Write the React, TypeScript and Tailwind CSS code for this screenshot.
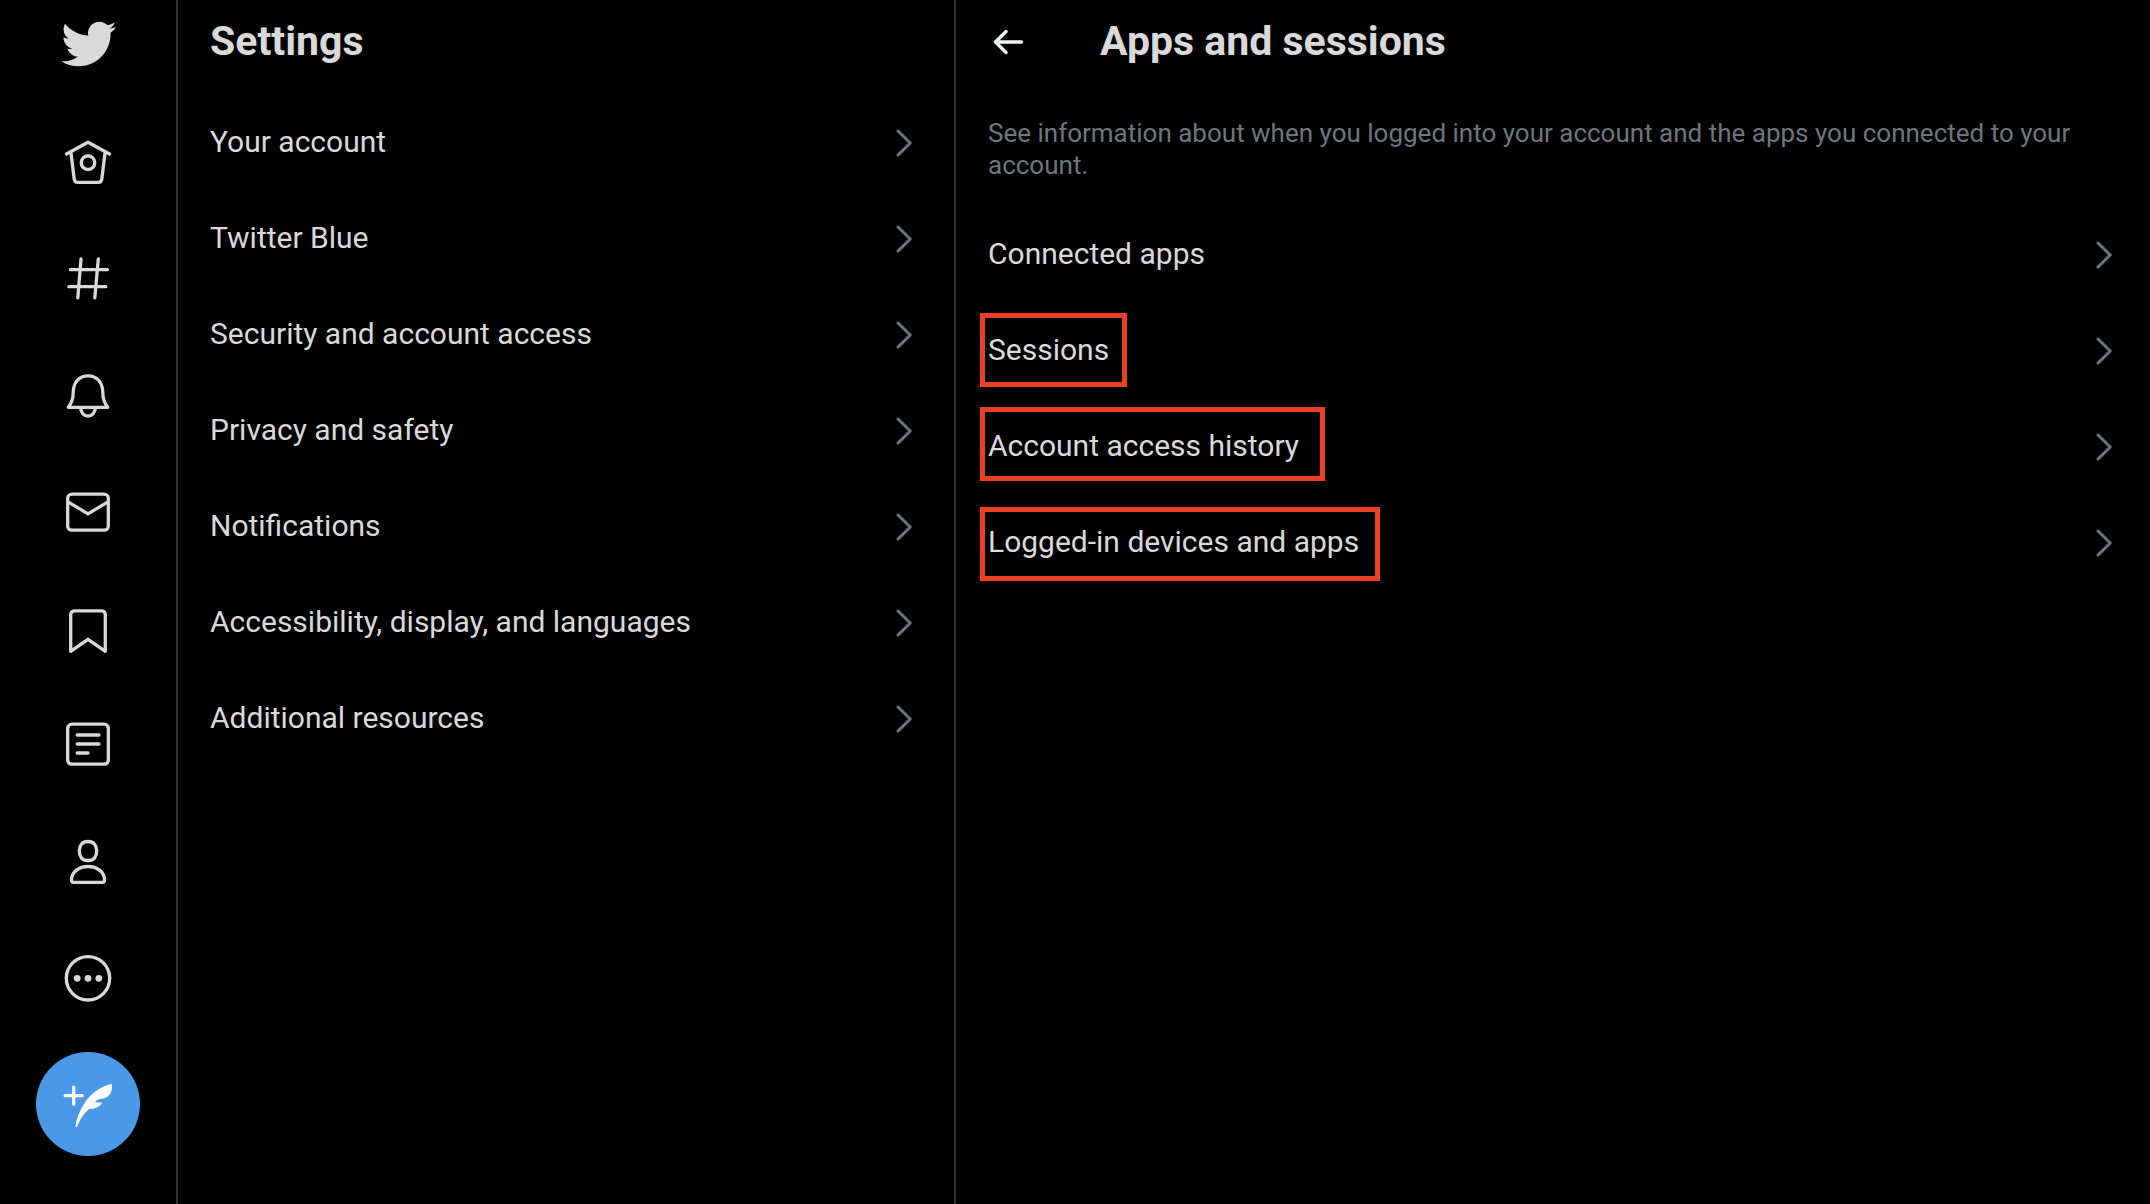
import type { ReactNode } from "react";

const BIRD =
  "M23.643 4.937c-.835.37-1.732.62-2.675.733.962-.576 1.7-1.49 2.048-2.578-.9.534-1.897.922-2.958 1.13-.85-.904-2.06-1.47-3.4-1.47-2.572 0-4.658 2.086-4.658 4.66 0 .364.042.718.12 1.06-3.873-.195-7.304-2.05-9.602-4.868-.4.69-.63 1.49-.63 2.342 0 1.616.823 3.043 2.072 3.878-.764-.025-1.482-.234-2.11-.583v.06c0 2.257 1.605 4.14 3.737 4.568-.392.106-.803.162-1.227.162-.3 0-.593-.028-.877-.082.593 1.85 2.313 3.198 4.352 3.234-1.595 1.25-3.604 1.995-5.786 1.995-.376 0-.747-.022-1.112-.065 2.062 1.323 4.51 2.093 7.14 2.093 8.57 0 13.255-7.098 13.255-13.254 0-.2-.005-.402-.014-.602.91-.658 1.7-1.477 2.323-2.41z";

function LineIcon({ children }: { children: ReactNode }) {
  return (
    <svg
      viewBox="0 0 52 52"
      className="size-[52px]"
      fill="none"
      stroke="currentColor"
      strokeWidth="3.3"
      strokeLinecap="round"
      strokeLinejoin="round"
      aria-hidden="true"
    >
      {children}
    </svg>
  );
}

const navItems: { label: string; icon: ReactNode }[] = [
  {
    label: "Home",
    icon: (
      <>
        <path d="M4.5 20 26 8.3 47.5 20" />
        <path d="m9 19 3.2 26q.4 3.3 3.5 3.3h20.6q3.1 0 3.5-3.3L43 19" />
        <circle cx="26" cy="28.7" r="6.8" />
      </>
    ),
  },
  {
    label: "Explore",
    icon: <path d="M8.4 18.7h37M6.8 35.7h37M19 7.8l-3.2 39M36.3 7.8l-3.5 39" />,
  },
  {
    label: "Notifications",
    icon: (
      <>
        <path d="M6.2 39.3h39.6c-3.4-4-5-9-5-14.5C40.8 14 34.5 7.8 26 7.8S11.2 14 11.2 24.8c0 5.5-1.6 10.5-5 14.5z" />
        <path d="M18.6 39.5c0 5 3.2 8.6 7.4 8.6s7.4-3.6 7.4-8.6" />
      </>
    ),
  },
  {
    label: "Messages",
    icon: (
      <>
        <rect x="5.7" y="9.2" width="40.6" height="36" rx="4" />
        <path d="m6 16.8 20 12.1 20-12.1" />
      </>
    ),
  },
  {
    label: "Bookmarks",
    icon: <path d="M8.7 49.3V12.8q0-4 4-4h26.6q4 0 4 4v36.5L26 37.3z" />,
  },
  {
    label: "Lists",
    icon: (
      <>
        <rect x="5.7" y="5.2" width="40.6" height="40" rx="4" />
        <path d="M15.2 16H37M15.2 25H37M15.2 34H26" />
      </>
    ),
  },
  {
    label: "Profile",
    icon: (
      <>
        <path d="M26 5.5c5.5 0 8.7 4 8.7 9.2 0 6-2.6 9.8-8.7 9.8s-8.7-3.8-8.7-9.8c0-5.2 3.2-9.2 8.7-9.2z" />
        <path d="M26 30.5c-9.5 0-16.5 5.8-16.5 13.5q0 2.3 2.3 2.3h28.4q2.3 0 2.3-2.3c0-7.7-7-13.5-16.5-13.5z" />
      </>
    ),
  },
  {
    label: "More",
    icon: (
      <>
        <circle cx="26" cy="25.3" r="21.7" />
        <g fill="currentColor" stroke="none">
          <circle cx="15.2" cy="25.3" r="3.4" />
          <circle cx="26" cy="25.3" r="3.4" />
          <circle cx="36.8" cy="25.3" r="3.4" />
        </g>
      </>
    ),
  },
];

const settings = [
  "Your account",
  "Twitter Blue",
  "Security and account access",
  "Privacy and safety",
  "Notifications",
  "Accessibility, display, and languages",
  "Additional resources",
];

const sessions: { label: string; mark?: string }[] = [
  { label: "Connected apps" },
  { label: "Sessions", mark: "top-[11px] w-[147px]" },
  { label: "Account access history", mark: "top-[9px] w-[345px]" },
  { label: "Logged-in devices and apps", mark: "top-[13px] w-[400px]" },
];

function Row({ label, mark }: { label: string; mark?: string }) {
  return (
    <li>
      <a href="#" className="relative flex h-24 items-center justify-between px-8">
        <span className="text-[30px] leading-10">{label}</span>
        <svg
          viewBox="0 0 24 32"
          className="h-8 w-6 text-[#6e767d]"
          fill="none"
          stroke="currentColor"
          strokeWidth="3"
          strokeLinecap="round"
          strokeLinejoin="round"
          aria-hidden="true"
        >
          <path d="m4 5 12.2 12L4 29" />
        </svg>
        {mark && <span className={`absolute left-6 h-[74px] border-[5px] border-[#eb4024] ${mark}`} />}
      </a>
    </li>
  );
}

export default function App() {
  return (
    <div className="grid min-h-screen grid-cols-[178px_778fr_1194fr] bg-black font-['Roboto',sans-serif] text-[#d9d9d9]">
      <nav aria-label="Primary" className="flex flex-col items-center gap-[17px] border-r-2 border-[#2f3336]">
        <a href="#" aria-label="Twitter" className="flex h-[93px] items-center pb-1.5">
          <svg viewBox="0 0 24 24" className="size-[58px]" fill="currentColor" aria-hidden="true">
            <path d={BIRD} />
          </svg>
        </a>
        {navItems.map((item) => (
          <a key={item.label} href="#" aria-label={item.label} className="flex size-[100px] items-center justify-center">
            <LineIcon>{item.icon}</LineIcon>
          </a>
        ))}
        <button
          type="button"
          aria-label="Tweet"
          className="mt-1.5 flex size-[104px] items-center justify-center rounded-full bg-[#4a99e9] text-white"
        >
          <LineIcon>
            <path d="M11.7 9.2v17M3.2 17.7h17" />
            <path
              fill="currentColor"
              stroke="none"
              d="M50 6C42 7 32 13 25.3 21.3C20 28 14 40 13.6 48.2Q13.8 50.2 15.2 48.7C17.5 42 22 35.5 27 31C32 31.4 38 29 40.5 24.3C38 24.7 35.5 24.7 33 23.7C35 22 36.5 21.3 40 20.8C47 19.5 50.5 15 50 6Z"
            />
          </LineIcon>
        </button>
      </nav>

      <section className="border-r-2 border-[#2f3336]">
        <header className="flex h-[94px] items-center px-8 pb-3">
          <h1 className="text-[41px] leading-12 font-bold">Settings</h1>
        </header>
        <ul className="pr-1">
          {settings.map((label) => (
            <Row key={label} label={label} />
          ))}
        </ul>
      </section>

      <main>
        <header className="flex h-[94px] items-center gap-[60px] px-8 pb-3">
          <button type="button" aria-label="Back" className="flex size-[52px] items-center text-[#eff3f4]">
            <svg
              viewBox="0 0 40 40"
              className="size-10"
              fill="none"
              stroke="currentColor"
              strokeWidth="3.4"
              strokeLinecap="round"
              strokeLinejoin="round"
              aria-hidden="true"
            >
              <path d="M18 10.500 7.500 21l10.500 10.500M7.500 21h26" />
            </svg>
          </button>
          <h2 className="text-[41px] leading-12 font-bold">Apps and sessions</h2>
        </header>
        <p className="mt-[23px] mb-[25px] px-8 text-[26px] leading-8 text-[#6e767d]">
          See information about when you logged into your account and the apps you connected to your account.
        </p>
        <ul>
          {sessions.map((row) => (
            <Row key={row.label} label={row.label} mark={row.mark} />
          ))}
        </ul>
      </main>
    </div>
  );
}
